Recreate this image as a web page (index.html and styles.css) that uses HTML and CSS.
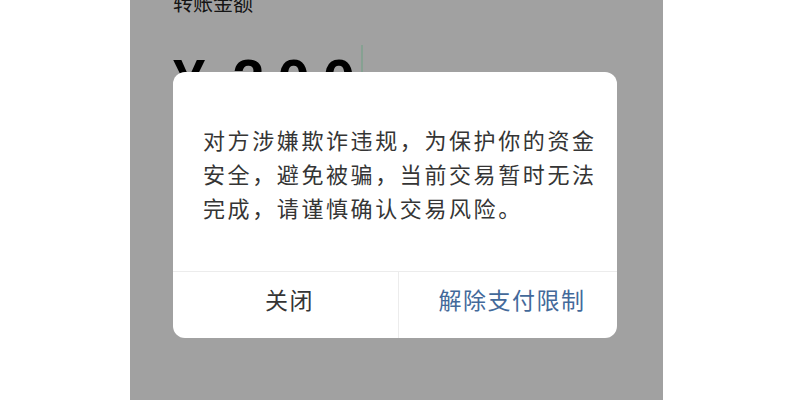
FILE: index.html
```html
<!DOCTYPE html>
<html lang="zh-CN">
<head>
    <meta charset="UTF-8">
    <meta name="viewport" content="width=device-width, initial-scale=1.0">
    <title>转账</title>
    <link rel="stylesheet" href="styles.css">
</head>
<body>

<div class="phone">
    <div class="transfer">
        <div class="label">转账金额</div>
        <div class="amount-row">
            <span class="currency">¥</span>
            <span class="amount">200</span>
            <span class="cursor"></span>
        </div>
    </div>

    <div class="mask"></div>

    <div class="dialog">
        <div class="dialog-body">
            对方涉嫌欺诈违规，为保护你的资金<br>
            安全，避免被骗，当前交易暂时无法<br>
            完成，请谨慎确认交易风险。
        </div>
        <div class="dialog-footer">
            <button class="btn btn-close">关闭</button>
            <button class="btn btn-primary">解除支付限制</button>
        </div>
    </div>
</div>

</body>
</html>
```

FILE: styles.css
```css
* {
    box-sizing: border-box;
    margin: 0;
    padding: 0;
    font-family: "Noto Sans CJK SC", "Noto Sans", sans-serif;
}

body {
    background-color: #fff;
    height: 400px;
    overflow: hidden;
}

.phone {
    position: relative;
    width: 533px;
    height: 400px;
    margin-left: 130px;
    background-color: #fff;
    overflow: hidden;
}

.transfer {
    padding-left: 43px;
}

.label {
    margin-top: -9px;
    font-size: 20px;
    line-height: 24px;
    color: #222;
}

.amount-row {
    display: flex;
    align-items: flex-start;
    margin-top: 14px;
}

.currency, .amount {
    font-family: "Liberation Sans", sans-serif;
    font-size: 58px;
    font-weight: bold;
    line-height: 64px;
    padding-top: 19px;
    color: #000;
}

.currency {
    margin-right: 27px;
}

.amount {
    letter-spacing: 13px;
}

.cursor {
    width: 2px;
    height: 60px;
    margin-top: 16px;
    margin-left: -7px;
    background-color: #d4ffe8;
}

.mask {
    position: absolute;
    inset: 0;
    background-color: rgba(0, 0, 0, 0.37);
}

.dialog {
    position: absolute;
    top: 72px;
    left: 43px;
    width: 444px;
    background-color: #fff;
    border-radius: 12px;
    overflow: hidden;
}

.dialog-body {
    padding: 50px 16px 47px 30px;
    font-size: 22px;
    line-height: 34px;
    letter-spacing: 2.6px;
    color: #353535;
}

.dialog-footer {
    display: grid;
    grid-template-columns: 226px 1fr;
    border-top: 1px solid #ececec;
    height: 67px;
}

.btn {
    background: none;
    border: none;
    padding: 0 0 12px 8px;
    font-size: 23px;
    letter-spacing: 1.5px;
    cursor: pointer;
}

.btn-close {
    color: #353535;
    border-right: 1px solid #ececec;
}

.btn-primary {
    color: #43699a;
}
```
